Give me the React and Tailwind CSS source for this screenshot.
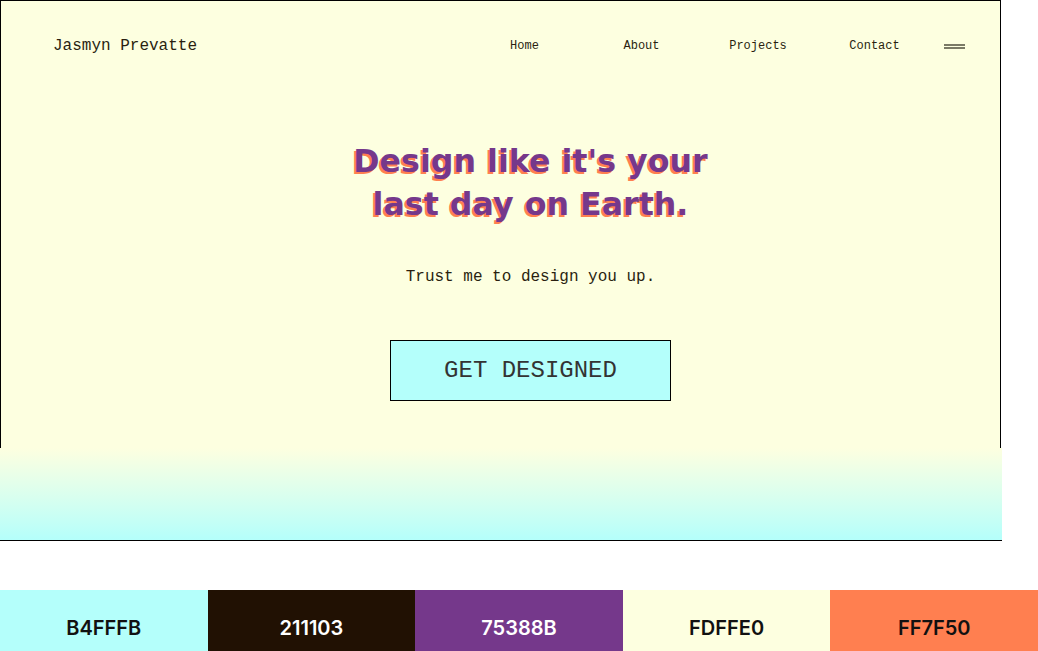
export default function App() {
  const mono = { fontFamily: '"Liberation Mono", "Courier New", monospace' };
  const swatches = [
    { hex: "B4FFFB", bg: "bg-[#B4FFFB]", fg: "text-[#111111]" },
    { hex: "211103", bg: "bg-[#211103]", fg: "text-white" },
    { hex: "75388B", bg: "bg-[#75388B]", fg: "text-white" },
    { hex: "FDFFE0", bg: "bg-[#FDFFE0]", fg: "text-[#111111]" },
    { hex: "FF7F50", bg: "bg-[#FF7F50]", fg: "text-[#111111]" },
  ];
  return (
    <div className="w-[1038px] h-[651px] overflow-hidden bg-white">
      <div className="w-[1001px] h-[448px] border-t border-l border-r border-black bg-[#FDFFE0] flex flex-col" style={mono}>
        <header className="h-[90px] flex items-center pl-[52px] text-[#2a1f10]">
          <div className="text-[16px] leading-none w-[413px]">Jasmyn Prevatte</div>
          <nav className="flex text-[12px] leading-none">
            <a className="w-[117px] text-center">Home</a>
            <a className="w-[117px] text-center">About</a>
            <a className="w-[116px] text-center">Projects</a>
            <a className="w-[117px] text-center">Contact</a>
          </nav>
          <div className="ml-[11px] flex flex-col gap-[1px]">
            <span className="block w-[21px] h-[2px] bg-[#7a7a66]"></span>
            <span className="block w-[21px] h-[2px] bg-[#7a7a66]"></span>
          </div>
        </header>
        <div className="flex flex-col items-center pl-[60px] mt-[49px]">
          <h1
            className="text-[31.7px] leading-[43px] font-bold text-center text-[#75388B] [text-shadow:-2px_2px_0_#FF7F50]"
            style={{ fontFamily: '"DejaVu Sans", Verdana, sans-serif' }}
          >
            Design like it's your
            <br />
            last day on Earth.
          </h1>
          <p className="mt-[41px] text-[16px] leading-[20px] text-[#2a1f10]">Trust me to design you up.</p>
          <button className="mt-[53px] w-[281px] h-[61px] border border-black bg-[#B4FFFB] text-[24px] leading-none text-[#333333]" style={mono}>
            GET DESIGNED
          </button>
        </div>
      </div>
      <div className="w-[1002px] h-[93px] bg-linear-to-b from-[#FDFFE0] to-[#B4FFFB] border-b border-black"></div>
      <div className="mt-[49px] flex h-[76px]" style={{ fontFamily: 'Inter, "Noto Sans", sans-serif' }}>
        {swatches.map((s) => (
          <div key={s.hex} className={`flex-1 flex items-center justify-center text-[20px] font-semibold ${s.bg} ${s.fg}`}>
            {s.hex}
          </div>
        ))}
      </div>
    </div>
  );
}
